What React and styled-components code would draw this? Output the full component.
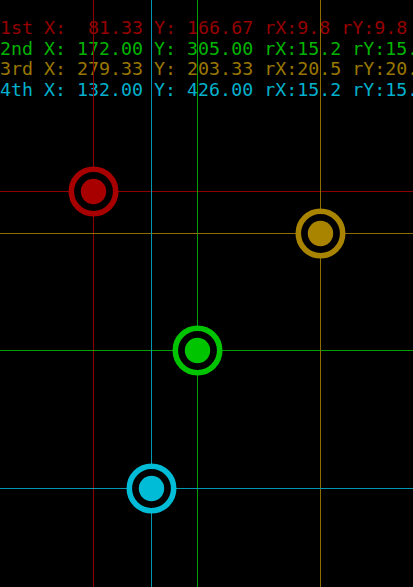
import styled, { createGlobalStyle } from "styled-components"

const GlobalStyle = createGlobalStyle`
  html, body {
    margin: 0;
    padding: 0;
    background: #000;
  }
`

const Screen = styled.div`
  position: relative;
  width: 413px;
  height: 587px;
  background: #000;
  overflow: hidden;
`

const Readout = styled.div`
  padding-top: 18px;
  display: flex;
  flex-direction: column;
`

const Line = styled.div`
  font-family: "DejaVu Sans Mono", "Liberation Mono", monospace;
  font-size: 18.3px;
  line-height: 20.6px;
  white-space: pre;
  color: ${(p) => p.$color};
`

// pointer overlay, drawn over the text like the android debug view
const Overlay = styled.svg`
  position: absolute;
  left: 0;
  top: 0;
  width: 413px;
  height: 587px;
`

const pointers = [
  { label: "1st X:  81.33 Y: 166.67 rX:9.8 rY:9.8", x: 93, y: 191, color: "#a80000", line: "#8c0000", text: "#960000" },
  { label: "2nd X: 172.00 Y: 305.00 rX:15.2 rY:15.2", x: 197, y: 350, color: "#00c400", line: "#00a000", text: "#00b400" },
  { label: "3rd X: 279.33 Y: 203.33 rX:20.5 rY:20.5", x: 320, y: 233, color: "#a88400", line: "#8c6e00", text: "#9a7800" },
  { label: "4th X: 132.00 Y: 426.00 rX:15.2 rY:15.2", x: 151, y: 488, color: "#00bcd6", line: "#0098b0", text: "#00b0cc" },
]

export default function App() {
  return (
    <>
      <GlobalStyle />
      <Screen>
        <Readout>
          {pointers.map((p) => (
            <Line key={p.label} $color={p.text}>
              {p.label}
            </Line>
          ))}
        </Readout>
        <Overlay viewBox="0 0 413 587">
          {pointers.map((p) => (
            <g key={p.label} shapeRendering="crispEdges">
              <rect x={0} y={p.y} width={413} height={1} fill={p.line} />
              <rect x={p.x} y={0} width={1} height={587} fill={p.line} />
            </g>
          ))}
          {pointers.map((p) => (
            <g key={p.label + "c"}>
              <circle cx={p.x + 0.5} cy={p.y + 0.5} r={22.2} fill="#000" stroke={p.color} strokeWidth={5.6} />
              <circle cx={p.x + 0.5} cy={p.y + 0.5} r={12.7} fill={p.color} />
            </g>
          ))}
        </Overlay>
      </Screen>
    </>
  )
}
